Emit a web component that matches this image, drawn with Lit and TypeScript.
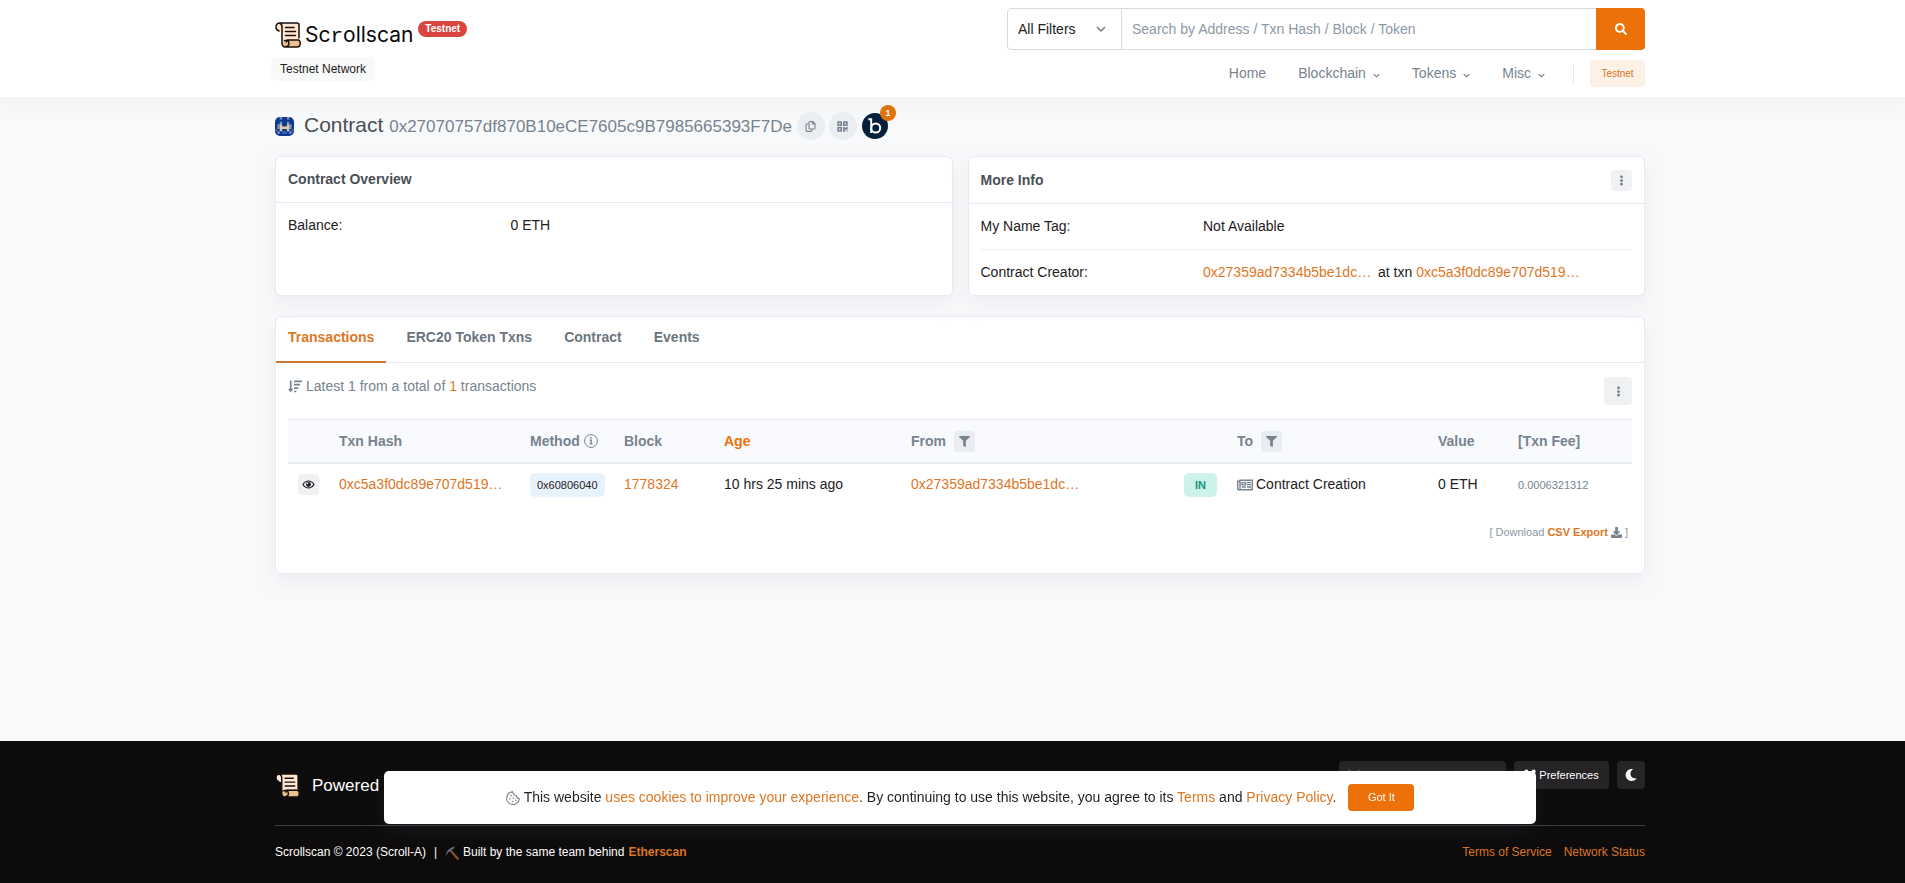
import { LitElement, html, css, svg, nothing } from "lit";
import { customElement, property } from "lit/decorators.js";

const glyphs: Record<string, { box: string; art: unknown }> = {
  search: {
    box: "0 0 512 512",
    art: svg`<path fill="currentColor" d="M505 442.7L405.3 343c-4.5-4.5-10.6-7-17-7H372c27.6-35.3 44-79.7 44-128C416 93.1 322.9 0 208 0S0 93.1 0 208s93.1 208 208 208c48.3 0 92.7-16.4 128-44v16.3c0 6.4 2.5 12.5 7 17l99.7 99.7c9.4 9.4 24.6 9.4 33.9 0l28.3-28.3c9.4-9.4 9.4-24.6.1-34zM208 336c-70.7 0-128-57.2-128-128 0-70.7 57.2-128 128-128 70.7 0 128 57.2 128 128 0 70.7-57.2 128-128 128z"/>`,
  },
  filter: {
    box: "0 0 512 512",
    art: svg`<path fill="currentColor" d="M487.976 0H24.028C2.71 0-8.047 25.866 7.058 40.971L192 225.941V432c0 7.831 3.821 15.17 10.237 19.662l80 55.98C298.02 518.69 320 507.493 320 487.98V225.941l184.947-184.97C520.021 25.896 509.338 0 487.976 0z"/>`,
  },
  moon: {
    box: "0 0 512 512",
    art: svg`<path fill="currentColor" d="M283.211 512c78.962 0 151.079-35.925 198.857-94.792 7.068-8.708-.639-21.43-11.562-19.35-124.203 23.654-238.262-71.576-238.262-196.954 0-72.222 38.662-138.635 101.498-174.394 9.686-5.512 7.25-20.197-3.756-22.23A258.156 258.156 0 0 0 283.211 0c-141.309 0-256 114.511-256 256 0 141.309 114.511 256 256 256z"/>`,
  },
  download: {
    box: "0 0 512 512",
    art: svg`<path fill="currentColor" d="M216 0h80c13.3 0 24 10.7 24 24v168h87.7c17.8 0 26.7 21.5 14.1 34.1L269.7 378.3c-7.5 7.5-19.8 7.5-27.3 0L90.1 226.1c-12.6-12.6-3.7-34.1 14.1-34.1H192V24c0-13.3 10.7-24 24-24zm296 376v112c0 13.3-10.7 24-24 24H24c-13.3 0-24-10.7-24-24V376c0-13.3 10.7-24 24-24h146.7l49 49c20.1 20.1 52.5 20.1 72.6 0l49-49H488c13.3 0 24 10.7 24 24z"/>`,
  },
  chevron: {
    box: "0 0 10 10",
    art: svg`<path d="M1.5 3.5 5 7l3.500-3.500" fill="none" stroke="currentColor" stroke-width="1.700" stroke-linecap="round" stroke-linejoin="round"/>`,
  },
  dots: {
    box: "0 0 12 12",
    art: svg`<g fill="currentColor"><rect x="4.500" y="0.500" width="3" height="3" rx="1.200"/><rect x="4.500" y="4.500" width="3" height="3" rx="1.200"/><rect x="4.500" y="8.500" width="3" height="3" rx="1.200"/></g>`,
  },
  copy: {
    box: "0 0 12 12",
    art: svg`<g fill="none" stroke="currentColor" stroke-width="1.200" stroke-linejoin="round"><path d="M4.400 1.500Q4.400.7 5.200.7H8.600l2.300 2.300v5q0 .8-.8.8H5.200q-.8 0-.8-.8z"/><path d="M8.300.9v2.400h2.400M4 3.200H2q-.9 0-.9.900v6.300q0 .9.900.9h4.600q.9 0 .9-.9V9"/></g>`,
  },
  qr: {
    box: "0 0 12 12",
    art: svg`<g fill="none" stroke="currentColor" stroke-width="1.700"><rect x="1.200" y="1.200" width="3.400" height="3.400"/><rect x="7.400" y="1.200" width="3.400" height="3.400"/><rect x="1.200" y="7.400" width="3.400" height="3.400"/></g><path fill="currentColor" d="M6.600 6.600h2v1h1v-1h2v3H8.600v2h-2zM9.300 10.300h.9v1.200h-.9zM10.800 10.300h.8v1.200h-.8z"/>`,
  },
  sort: {
    box: "0 0 14 13",
    art: svg`<path fill="none" stroke="currentColor" stroke-width="1.700" d="M2.700.4V11M6 1.300h8M6 4.700h6M6 8.100h4.200M6 11.500h2.400"/><path fill="currentColor" d="M0 8.700h5.400L2.700 12.600z"/>`,
  },
  info: {
    box: "0 0 14 14",
    art: svg`<circle cx="7" cy="7" r="6.400" fill="none" stroke="currentColor"/><path fill="currentColor" d="M6.200 3h1.600v1.500H6.200zM5.500 5.600h2.300v4h.9v.9H5.500v-.9h.9v-3h-.9z"/>`,
  },
  eye: {
    box: "0 0 14 12",
    art: svg`<path d="M1 6Q3.300 2.200 7 2.200T13 6Q10.700 9.800 7 9.800T1 6z" fill="none" stroke="currentColor" stroke-width="1.300"/><circle cx="7" cy="6" r="2.700" fill="currentColor"/><circle cx="6" cy="5" r=".8" fill="#fff"/>`,
  },
  paper: {
    box: "0 0 16 12",
    art: svg`<path d="M3 10V1.200h12.300v9.600H1.700Q.7 10.800.7 9.700V2.200H3" fill="none" stroke="currentColor" stroke-width="1.400"/><path d="M5 3.700h3.600v2.200H5zM10 3.700h4M10 5.700h4M4.800 8h4M10 8h4" fill="none" stroke="currentColor" stroke-width="1.300"/>`,
  },
  cookie: {
    box: "0 0 14 14",
    art: svg`<path d="M6.500.6Q5.200.9 3.600 1.800 1.900 2.800 1.400 4.500L.7 7q-.3 1.500.6 3l1 1.500q.8 1.100 2.300 1.500l2.200.4q1.400.2 2.700-.5l1.800-1.100q1.200-.8 1.600-2.200l.5-2q-2.500 0-2.900-2.700Q7.800 4.500 7.500 2.600 6.500 2 6.500.6z" fill="none" stroke="currentColor" stroke-width="1.100" stroke-linejoin="round"/><g fill="currentColor"><circle cx="5" cy="4.500" r=".8"/><circle cx="3.900" cy="8" r=".8"/><circle cx="7.200" cy="7" r=".8"/><circle cx="6.600" cy="10.500" r=".8"/><circle cx="9.800" cy="9.300" r=".8"/></g>`,
  },
  tools: {
    box: "0 0 12 12",
    art: svg`<path d="M2.500 2.500l7 7M9.500 2.500l-7 7" stroke="currentColor" stroke-width="2"/><g fill="currentColor"><circle cx="2.300" cy="2.300" r="1.900"/><circle cx="9.700" cy="2.300" r="1.900"/><circle cx="2.300" cy="9.700" r="1.900"/><circle cx="9.700" cy="9.700" r="1.900"/></g>`,
  },
  fox: {
    box: "0 0 12 12",
    art: svg`<path d="M.5.5 5 3h2l4.500-2.500-1 5 .6 3-2.100 2.500H3L.9 8.500l.6-3z" fill="#8f6a55"/><path d="M3.500 6.500l1.500 1H3.500zM8.500 6.500L7 7.500h1.500z" fill="#233447"/>`,
  },
  pickaxe: {
    box: "0 0 14 14",
    art: svg`<path d="M5.500 4.500 12.800 12.800" stroke="#8a4b38" stroke-width="2.200" stroke-linecap="round"/><path d="M.6 10Q1.300 3.600 7 1.200L9.800.6 8.600 3Q3.600 4.800.6 10z" fill="#5d7079"/>`,
  },
  identicon: {
    box: "0 0 8 8",
    art: svg`<path fill="#0d3a8f" d="M0 0h8v8H0z"/><path fill="#7f93bd" d="M2 0h1v1H2zM5 0h1v1H5zM1 3h1v2H1zM6 3h1v2H6zM1 6h1v1H1zM6 6h1v1H6zM2 2h1v1H2zM5 2h1v1H5z"/><path fill="#e5c9a4" d="M2 3h1v3H2zM5 3h1v3H5zM3 4h2v1H3z"/><path fill="#3f64aa" d="M3 6h2v1H3zM0 5h1v1H0zM7 5h1v1H7z"/>`,
  },
  scroll: {
    box: "0 0 26 26",
    art: svg`<path d="M4.500 1H22q2 0 2 2v14.500H10.500q-4 0-4 4V9H4.500Q1 9 1 5T4.500 1z" fill="#ffe8d4"/><path d="M4.500 1Q8 1.500 7 5v4H4.500Q1 9 1 5T4.500 1z" fill="#ffe8d4"/><path d="M11 18h12.500q2 .5 2 3.500t-2.500 3.500H10q-3-.5-3-3.500T11 18z" fill="#ebc28e"/><g fill="none" stroke="#1a0f0a" stroke-width="1.500" stroke-linecap="round" stroke-linejoin="round"><path d="M4.500 1H22q2 0 2 2v13M4.500 1Q1 1.500 1 5q0 3 3 4M4.500 1Q7 2 7 5v16q0 4 3.500 4H22q3.200 0 3.200-3.500 0-3-2-3.500H12M12 18q2 1 2 3.500T10.500 25M9.500 18.500q2-.5 2 1.500"/><path d="M10.500 5.500h8.500M10.500 9.500h10M10.500 13.500h10"/></g>`,
  },
  blockscan: {
    box: "0 0 26 26",
    art: svg`<circle cx="13" cy="13" r="13" fill="#04203a"/><path d="M6.300 6.200h2.900v13.800" fill="none" stroke="#fff" stroke-width="1.900"/><circle cx="13.700" cy="15" r="4.500" fill="none" stroke="#fff" stroke-width="2"/>`,
  },
};

@customElement("scan-icon")
class ScanIcon extends LitElement {
  @property() name = "";
  static styles = css`
    :host { display: inline-block; width: 12px; height: 12px; flex: none; }
    svg { display: block; width: 100%; height: 100%; }
  `;
  render() {
    const g = glyphs[this.name];
    return g ? html`<svg viewBox=${g.box} aria-hidden="true">${g.art}</svg>` : nothing;
  }
}

@customElement("app-root")
class AppRoot extends LitElement {
  static styles = css`
    * { box-sizing: border-box; }
    :host {
      display: flex; flex-direction: column; min-height: 100vh; overflow-x: hidden;
      font: 14px/21px "Liberation Sans", Arial, sans-serif; color: #1e2022; background: #f8f9fa;
    }
    button, input, select { font: inherit; color: inherit; margin: 0; border: 0; padding: 0; background: none; }
    button { cursor: pointer; display: inline-flex; align-items: center; justify-content: center; }
    a { color: #dd761f; text-decoration: none; }
    h1, h2, p { margin: 0; font-weight: 400; }
    .bar { padding-left: 15px; }
    .wrap { max-width: 1370px; margin: 0 auto; }

    .head { background: #fff; border-bottom: 1px solid #f1f3f5; box-shadow: 0 6px 18px rgba(140, 152, 164, 0.08); }
    .head .wrap { display: flex; justify-content: space-between; height: 97px; }
    .brand { padding-top: 21px; display: flex; flex-direction: column; align-items: flex-start; gap: 8px; }
    .logo { display: flex; height: 28px; color: #0a0a0a; }
    .logo scan-icon { width: 26px; height: 26px; margin: 1px 4px 0 0; }
    .word { font: 400 21px/28px Inter, sans-serif; }
    .slab { font-family: "Liberation Mono", monospace; }
    .red { margin-left: 5px; height: 16px; border-radius: 8px; padding: 0 7px; background: #db4540; color: #fff; font-size: 10px; font-weight: 700; line-height: 16px; }
    .net { margin-left: -4px; padding: 0 9px; height: 24px; border-radius: 5px; background: #f8fafa; font-size: 12px; line-height: 24px; }
    .tools { width: 638px; padding-top: 8px; }
    .search { display: flex; height: 42px; }
    .kind { display: grid; width: 115px; border: 1px solid #d5dae2; border-radius: 4px 0 0 4px; align-items: center; }
    .kind > * { grid-area: 1 / 1; }
    .kind select { appearance: none; height: 40px; width: 100%; padding-left: 10px; }
    .kind scan-icon { justify-self: end; width: 10px; height: 10px; margin-right: 15px; color: #77838f; pointer-events: none; }
    .q { flex: 1; min-width: 0; border: solid #d5dae2; border-width: 1px 0; padding: 0 10px; }
    .q::placeholder { color: #8c98a4; opacity: 1; }
    .go { width: 49px; background: #eb7108; color: #fff; border-radius: 0 4px 4px 0; }
    .menu { display: flex; justify-content: flex-end; align-items: center; height: 27px; margin-top: 10px; }
    .menu a { color: #77838f; margin-right: 32px; display: flex; align-items: center; gap: 7px; }
    .menu a scan-icon { width: 7px; height: 7px; margin-top: 3px; }
    .rule { width: 1px; height: 20px; background: #e7eaf3; margin: 0 16px 0 -4px; }
    .menu .tn { width: 55px; height: 27px; border-radius: 4px; background: #fdf0e5; color: #d97428; font-size: 10px; }

    main { flex: 1; }
    .title { display: flex; align-items: center; height: 58px; padding-bottom: 2px; }
    .title .id { width: 19px; height: 19px; border-radius: 5px; overflow: hidden; margin-right: 10px; }
    h1 { font-size: 21px; line-height: 30px; color: #4a4f55; margin-right: 5px; }
    h1 small { font-size: 17px; color: #77838f; }
    .round { width: 28px; height: 28px; border-radius: 50%; background: #ebeef1; color: #77838f; margin-right: 4px; }
    .round scan-icon, .sq scan-icon { width: 11px; height: 11px; }
    .bs { position: relative; width: 26px; height: 26px; margin-left: 1px; }
    .bs scan-icon { width: 26px; height: 26px; }
    .num { position: absolute; right: -8px; top: -8px; width: 16px; height: 16px; border-radius: 8px; background: #de7310; color: #fff; font-size: 9px; font-weight: 700; line-height: 16px; text-align: center; }

    .card { background: #fff; border: 1px solid #e7eaf3; border-radius: 6px; box-shadow: 0 8px 18px rgba(189, 197, 209, 0.2); }
    .pair { display: grid; grid-template-columns: 1fr 1fr; gap: 15px; margin-bottom: 20px; }
    .card h2 { display: flex; align-items: center; justify-content: space-between; padding: 12px; height: 46px; border-bottom: 1px solid #e7eaf3; color: #4a4f55; font-size: 14px; font-weight: 700; }
    .card h2.tall { height: 47px; }
    .rows { padding: 0 12px; }
    .row { display: grid; grid-template-columns: 1fr 2fr; gap: 8px; padding: 12px 0; line-height: 21px; }
    .row + .row { border-top: 1px solid #eceff4; }
    .row .pad { margin-right: 3px; }
    .sq { width: 21px; height: 21px; border-radius: 4px; background: #eff1f3; color: #77838f; }
    .big { width: 28px; height: 28px; }

    .tabs { display: flex; gap: 8px; height: 46px; border-bottom: 1px solid #e7eaf3; }
    .tabs button { padding: 0 12px 4px; height: 46px; font-weight: 700; color: #6c757e; border-bottom: 2px solid transparent; }
    .tabs .on { color: #dd761f; border-color: #cb7530; }
    .body { padding: 14px 12px 30px; }
    .sum { display: flex; justify-content: space-between; align-items: flex-start; height: 42px; color: #77838f; }
    .sum p { display: flex; align-items: center; gap: 4px; margin-top: -1px; }
    .sum scan-icon[name="sort"] { width: 14px; height: 13px; }
    table { width: 100%; table-layout: fixed; border-collapse: separate; border-spacing: 0; }
    th { height: 45px; padding: 0 0 0 10px; text-align: left; background: #f8fafd; border: solid #e7eaf3; border-width: 1px 0 2px; color: #77838f; white-space: nowrap; }
    td { height: 41px; padding: 0 0 0 10px; white-space: nowrap; }
    .cell { display: flex; align-items: center; }
    th .sq { margin-left: 8px; background: #e9ecf2; }
    th scan-icon[name="info"] { width: 14px; height: 14px; margin-left: 4px; }
    .age { color: #eb7108; }
    .eye { color: #1e2022; }
    .eye scan-icon { width: 13px; height: 11px; }
    .tag { display: inline-block; height: 24px; padding: 0 7px; border-radius: 5px; background: #e7f3fc; font-size: 11px; line-height: 24px; }
    .in { width: 33px; padding: 0; text-align: center; background: #ccf2ea; color: #1a8f78; font-weight: 700; }
    .cell scan-icon[name="paper"] { width: 16px; height: 12px; margin-right: 3px; color: #77838f; }
    .fee { font-size: 11px; color: #77838f; }
    .csv { display: flex; justify-content: flex-end; align-items: center; gap: 3px; margin: 17px 4px 0 0; font-size: 11px; color: #8c98a4; }
    .csv a { font-weight: 700; }
    .csv scan-icon { width: 11px; height: 11px; color: #77838f; }
    .c1 { width: 41px; } .c2 { width: 191px; } .c3 { width: 94px; } .c4 { width: 100px; } .c5 { width: 187px; }
    .c6 { width: 273px; } .c7 { width: 53px; } .c8 { width: 201px; } .c9 { width: 80px; } .c10 { width: 124px; }

    footer { background: #0d0b0c; color: #fff; }
    .top { display: flex; justify-content: space-between; height: 85px; padding-top: 20px; border-bottom: 1px solid #3a3a3c; }
    .pow { display: flex; align-items: center; gap: 12px; height: 48px; font-size: 17px; }
    .pow scan-icon { width: 25px; height: 25px; }
    .acts { display: flex; gap: 8px; }
    .acts button { width: 95px; height: 28px; border-radius: 4px; background: #262426; color: #fff; font-size: 11px; gap: 3px; }
    .acts .net2 { width: 167px; }
    .acts .moon { width: 28px; }
    .end { display: flex; justify-content: space-between; padding: 16px 0 20px; font-size: 12px; }
    .end p { display: flex; align-items: center; }
    .end .sep { margin: 0 8px; }
    .end p scan-icon { width: 14px; height: 14px; margin-right: 4px; }
    .end b { margin-left: 4px; }
    .end nav { display: flex; gap: 12px; }
    .cookie { position: fixed; left: 15px; right: 0; bottom: 59px; margin: 0 auto; width: 80%; max-width: 1152px; height: 53px; border-radius: 5px; background: #fff; display: flex; align-items: center; justify-content: center; box-shadow: 0 6px 24px rgba(140, 152, 164, 0.1); }
    .cookie scan-icon { width: 14px; height: 14px; margin-right: 4px; color: #77838f; }
    .cookie button { width: 66px; height: 27px; margin-left: 12px; border-radius: 4px; background: #eb7108; color: #fff; font-size: 11px; }
    .cookie p { line-height: 21px; }
  `;

  private cols = ["", "Txn Hash", "Method", "Block", "Age", "From", "", "To", "Value", "[Txn Fee]"];

  private heading(c: string) {
    if (c === "Method") return html`<div class="cell">Method<scan-icon name="info"></scan-icon></div>`;
    if (c === "From" || c === "To")
      return html`<div class="cell">${c}<button class="sq" aria-label="Filter ${c}"><scan-icon name="filter"></scan-icon></button></div>`;
    if (c === "Age") return html`<a class="age" href="#">Age</a>`;
    return c;
  }

  render() {
    return html`
      <header class="head bar"><div class="wrap">
        <div class="brand">
          <div class="logo"><scan-icon name="scroll"></scan-icon><span class="word">Sc<span class="slab">r</span>ollscan</span><span class="red">Testnet</span></div>
          <span class="net">Testnet Network</span>
        </div>
        <div class="tools">
          <form class="search" @submit=${(e: Event) => e.preventDefault()}>
            <div class="kind"><select aria-label="Search filter"><option>All Filters</option></select><scan-icon name="chevron"></scan-icon></div>
            <input class="q" aria-label="Search" placeholder="Search by Address / Txn Hash / Block / Token">
            <button class="go" aria-label="Search"><scan-icon name="search"></scan-icon></button>
          </form>
          <nav class="menu">
            <a href="#">Home</a>
            ${["Blockchain", "Tokens", "Misc"].map((m) => html`<a href="#">${m}<scan-icon name="chevron"></scan-icon></a>`)}
            <span class="rule"></span><button class="tn">Testnet</button>
          </nav>
        </div>
      </div></header>

      <main class="bar"><div class="wrap">
        <div class="title">
          <scan-icon class="id" name="identicon"></scan-icon>
          <h1>Contract <small>0x27070757df870B10eCE7605c9B7985665393F7De</small></h1>
          <button class="round" aria-label="Copy address"><scan-icon name="copy"></scan-icon></button>
          <button class="round" aria-label="QR code"><scan-icon name="qr"></scan-icon></button>
          <a class="bs" href="#" aria-label="Blockscan"><scan-icon name="blockscan"></scan-icon><span class="num">1</span></a>
        </div>
        <div class="pair">
          <section class="card">
            <h2>Contract Overview</h2>
            <div class="rows"><div class="row"><span>Balance:</span><span>0 ETH</span></div></div>
          </section>
          <section class="card">
            <h2 class="tall">More Info<button class="sq" aria-label="More options"><scan-icon name="dots"></scan-icon></button></h2>
            <div class="rows">
              <div class="row"><span>My Name Tag:</span><span>Not Available</span></div>
              <div class="row"><span>Contract Creator:</span><span><a class="pad" href="#">0x27359ad7334b5be1dc…</a> at txn <a href="#">0xc5a3f0dc89e707d519…</a></span></div>
            </div>
          </section>
        </div>
        <section class="card">
          <div class="tabs">
            ${["Transactions", "ERC20 Token Txns", "Contract", "Events"].map((t, i) => html`<button class=${i ? "" : "on"}>${t}</button>`)}
          </div>
          <div class="body">
            <div class="sum">
              <p><scan-icon name="sort"></scan-icon><span>Latest 1 from a total of <a href="#">1</a> transactions</span></p>
              <button class="sq big" aria-label="Table options"><scan-icon name="dots"></scan-icon></button>
            </div>
            <table>
              <thead><tr>${this.cols.map((c, i) => html`<th class="c${i + 1}">${this.heading(c)}</th>`)}</tr></thead>
              <tbody><tr>
                <td><div class="cell"><button class="sq eye" aria-label="Preview"><scan-icon name="eye"></scan-icon></button></div></td>
                <td><a href="#">0xc5a3f0dc89e707d519…</a></td>
                <td><div class="cell"><span class="tag">0x60806040</span></div></td>
                <td><a href="#">1778324</a></td>
                <td>10 hrs 25 mins ago</td>
                <td><a href="#">0x27359ad7334b5be1dc…</a></td>
                <td><div class="cell"><span class="tag in">IN</span></div></td>
                <td><div class="cell"><scan-icon name="paper"></scan-icon>Contract Creation</div></td>
                <td>0 ETH</td>
                <td><span class="fee">0.0006321312</span></td>
              </tr></tbody>
            </table>
            <p class="csv">[ Download <a href="#">CSV Export</a><scan-icon name="download"></scan-icon>]</p>
          </div>
        </section>
      </div></main>

      <footer class="bar"><div class="wrap">
        <div class="top">
          <div class="pow"><scan-icon name="scroll"></scan-icon>Powered by Scroll Testnet</div>
          <div class="acts">
            <button class="net2"><scan-icon name="fox"></scan-icon>Add Scroll Sepolia Network</button>
            <button><scan-icon name="tools"></scan-icon>Preferences</button>
            <button class="moon" aria-label="Dark mode"><scan-icon name="moon"></scan-icon></button>
          </div>
        </div>
        <div class="end">
          <p>Scrollscan © 2023 (Scroll-A)<span class="sep">|</span><scan-icon name="pickaxe"></scan-icon>Built by the same team behind<b><a href="#">Etherscan</a></b></p>
          <nav><a href="#">Terms of Service</a><a href="#">Network Status</a></nav>
        </div>
      </div></footer>

      <div class="cookie">
        <scan-icon name="cookie"></scan-icon>
        <p>This website <a href="#">uses cookies to improve your experience</a>. By continuing to use this website, you agree to its <a href="#">Terms</a> and <a href="#">Privacy Policy</a>.</p>
        <button>Got It</button>
      </div>
    `;
  }
}
